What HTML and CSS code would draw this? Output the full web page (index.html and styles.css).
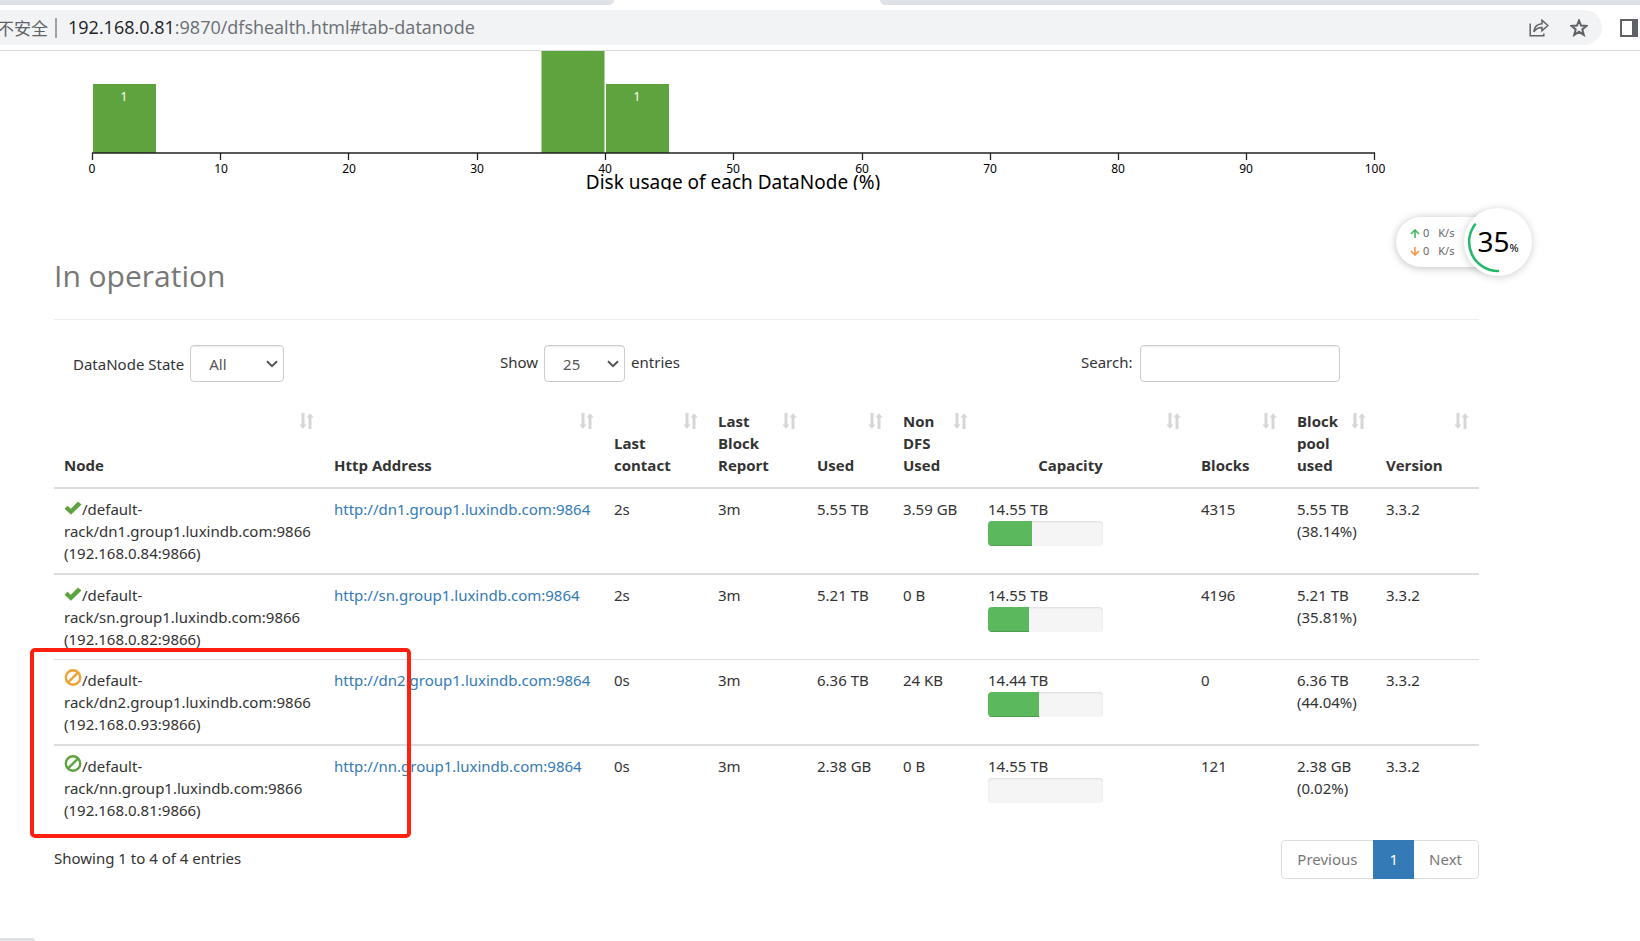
FILE: index.html
```html
<!DOCTYPE html>
<html lang="en">
<head>
<meta charset="utf-8">
<title>Namenode information</title>
<link rel="stylesheet" href="styles.css">
</head>
<body>
<svg class="defs" aria-hidden="true">
  <symbol id="sort" viewBox="0 0 15 16"><path d="M2.5 0h3v11.500h2L4 15.800 .3 11.500h2.200zM9.500 16h3V4.500h2.200L11 .2 7.500 4.500h2z"/></symbol>
  <symbol id="ok" viewBox="0 0 17 14"><path d="M0 7.800 3.200 4.700 6.300 7.800 13.500 .5 17 3.400 6.500 13.800z"/></symbol>
  <symbol id="ban" viewBox="0 0 17 17"><circle cx="8.500" cy="8.500" r="7.200"/><path d="M3.600 13.400 13.400 3.600"/></symbol>
</svg>

<header class="browser">
  <div class="tabstrip"><span class="tabs-left"></span><span class="tabs-right"></span></div>
  <div class="toolbar">
    <div class="omnibox">
      <span class="insecure">不安全</span>
      <span class="divider"></span>
      <div class="url" role="textbox" aria-label="Address">192.168.0.81<span class="path">:9870/dfshealth.html#tab-datanode</span></div>
      <button class="tool" aria-label="Share"><svg width="20" height="18" viewBox="0 0 20 18"><path d="M1.200 4.500V16.800H14.800V14.500M4.800 12.800C5.500 7.500 8.500 5 13 4.800V1.200L18.800 6.500 13 11.800V8.500C9.500 8.300 7 9.800 4.800 12.800Z"/></svg></button>
      <button class="tool" aria-label="Bookmark"><svg width="18" height="18" viewBox="0 0 18 18"><path class="star" d="M9 1.500 11 6.600 16.600 6.900 12.300 10.400 13.800 15.900 9 12.800 4.200 15.900 5.700 10.400 1.400 6.900 7 6.600Z"/></svg></button>
    </div>
    <button class="tool panel" aria-label="Side panel"><svg width="18" height="18" viewBox="0 0 18 18"><path d="M1 1H17V17H1Z"/><path class="solid" d="M12 0h6v18h-6z"/></svg></button>
  </div>
</header>

<main class="container">
  <svg class="chart" width="1425" height="139" viewBox="0 0 1425 139" role="img" aria-label="Disk usage of each DataNode">
    <g class="bars"><rect x="39" y="33" width="63" height="69"/><rect x="487.500" y="0" width="63" height="102"/><rect x="552" y="33" width="63" height="69"/></g>
    <g class="count"><text x="70" y="50">1</text><text x="583" y="50">1</text></g>
    <path class="axis" d="M38.500 109V102H1320.500V109M166.500 102V109M294.500 102V109M423.500 102V109M551.500 102V109M679.500 102V109M808.500 102V109M936.500 102V109M1064.500 102V109M1192.500 102V109"/>
    <g class="ticks"><text x="38" y="122">0</text><text x="167" y="122">10</text><text x="295" y="122">20</text><text x="423" y="122">30</text><text x="551" y="122">40</text><text x="679" y="122">50</text><text x="808" y="122">60</text><text x="936" y="122">70</text><text x="1064" y="122">80</text><text x="1192" y="122">90</text><text x="1321" y="122">100</text></g>
    <text class="caption" x="679" y="138">Disk usage of each DataNode (%)</text>
  </svg>

  <h1 class="page-header">In operation</h1>

  <div class="filters">
    <div class="filter state"><label for="state">DataNode State</label><span class="select"><select id="state"><option>All</option></select><svg width="12" height="8" viewBox="0 0 12 8"><path d="M1 1.200 6 6.200 11 1.200"/></svg></span></div>
    <div class="filter raised"><label for="len">Show</label><span class="select short"><select id="len"><option>25</option></select><svg width="12" height="8" viewBox="0 0 12 8"><path d="M1 1.200 6 6.200 11 1.200"/></svg></span><label for="len">entries</label></div>
    <div class="filter raised search"><label for="search">Search:</label><input id="search" type="search"></div>
  </div>

  <table class="nodes">
    <colgroup><col class="c-node"><col class="c-http"><col class="c-contact"><col class="c-report"><col class="c-used"><col class="c-nondfs"><col class="c-capacity"><col class="c-blocks"><col class="c-pool"><col class="c-version"></colgroup>
    <thead><tr>
      <th>Node<svg><use href="#sort"/></svg></th>
      <th>Http Address<svg><use href="#sort"/></svg></th>
      <th>Last<br>contact<svg><use href="#sort"/></svg></th>
      <th>Last<br>Block<br>Report<svg><use href="#sort"/></svg></th>
      <th>Used<svg><use href="#sort"/></svg></th>
      <th>Non<br>DFS<br>Used<svg><use href="#sort"/></svg></th>
      <th class="center">Capacity<svg><use href="#sort"/></svg></th>
      <th>Blocks<svg><use href="#sort"/></svg></th>
      <th>Block<br>pool<br>used<svg><use href="#sort"/></svg></th>
      <th>Version<svg><use href="#sort"/></svg></th>
    </tr></thead>
    <tbody>
      <tr><td><svg class="ok"><use href="#ok"/></svg>/default-<br>rack/dn1.group1.luxindb.com:9866<br>(192.168.0.84:9866)</td><td><a href="#dn1">http://dn1.group1.luxindb.com:9864</a></td><td>2s</td><td>3m</td><td>5.55 TB</td><td>3.59 GB</td><td>14.55 TB<div class="progress"><div class="bar" style="width:38.14%"></div></div></td><td>4315</td><td>5.55 TB<br>(38.14%)</td><td>3.3.2</td></tr>
      <tr><td><svg class="ok"><use href="#ok"/></svg>/default-<br>rack/sn.group1.luxindb.com:9866<br>(192.168.0.82:9866)</td><td><a href="#sn">http://sn.group1.luxindb.com:9864</a></td><td>2s</td><td>3m</td><td>5.21 TB</td><td>0 B</td><td>14.55 TB<div class="progress"><div class="bar" style="width:35.81%"></div></div></td><td>4196</td><td>5.21 TB<br>(35.81%)</td><td>3.3.2</td></tr>
      <tr class="thin"><td><svg class="ban warn"><use href="#ban"/></svg>/default-<br>rack/dn2.group1.luxindb.com:9866<br>(192.168.0.93:9866)</td><td><a href="#dn2">http://dn2.group1.luxindb.com:9864</a></td><td>0s</td><td>3m</td><td>6.36 TB</td><td>24 KB</td><td>14.44 TB<div class="progress"><div class="bar" style="width:44.04%"></div></div></td><td>0</td><td>6.36 TB<br>(44.04%)</td><td>3.3.2</td></tr>
      <tr><td><svg class="ban"><use href="#ban"/></svg>/default-<br>rack/nn.group1.luxindb.com:9866<br>(192.168.0.81:9866)</td><td><a href="#nn">http://nn.group1.luxindb.com:9864</a></td><td>0s</td><td>3m</td><td>2.38 GB</td><td>0 B</td><td>14.55 TB<div class="progress"></div></td><td>121</td><td>2.38 GB<br>(0.02%)</td><td>3.3.2</td></tr>
    </tbody>
  </table>

  <div class="footer">
    <span class="info">Showing 1 to 4 of 4 entries</span>
    <nav class="pagination"><a href="#prev">Previous</a><a class="active" href="#page1">1</a><a href="#next">Next</a></nav>
  </div>
</main>

<div class="marker"></div>
<div class="status"></div>

<aside class="monitor">
  <div class="rates">
    <div class="rate"><svg class="up" width="10" height="9" viewBox="0 0 10 9"><path d="M5 9V1M1 5 5 1 9 5"/></svg><span>0</span><span>K/s</span></div>
    <div class="rate"><svg class="down" width="10" height="9" viewBox="0 0 10 9"><path d="M5 0V8M1 4 5 8 9 4"/></svg><span>0</span><span>K/s</span></div>
  </div>
  <div class="gauge"><svg width="68" height="68" viewBox="0 0 68 68"><path d="M11 16.500A29 29 0 0 0 34 63"/></svg><span class="value">35</span><span class="unit">%</span></div>
</aside>
</body>
</html>
```

FILE: styles.css
```css
* { box-sizing: border-box; }
body {
  margin: 0;
  min-height: 100vh;
  position: relative;
  overflow: hidden;
  background: #fff;
  color: #333;
  font: 15px/22px "Noto Sans", "Open Sans", sans-serif;
}
.defs { position: absolute; width: 0; height: 0; }
a { color: #337ab7; text-decoration: none; }

/* browser chrome */
.browser { border-bottom: 1px solid #d9dadc; }
.tabstrip { display: flex; justify-content: space-between; height: 5px; }
.tabs-left { width: 614px; background: #dee1e6; border-bottom-right-radius: 8px; }
.tabs-right { flex: 1; margin-left: 266px; background: #dee1e6; border-bottom-left-radius: 8px; }
.toolbar { display: flex; align-items: center; padding: 5px 0; gap: 18px; }
.omnibox {
  flex: 1;
  display: flex;
  align-items: center;
  height: 35px;
  padding-right: 14px;
  background: #f1f3f4;
  border-radius: 0 18px 18px 0;
  font-family: "Open Sans", "Noto Sans", sans-serif;
  font-size: 18px;
}
.insecure {
  width: 48px;
  display: flex;
  justify-content: flex-end;
  overflow: hidden;
  white-space: nowrap;
  color: #5f6368;
  font-family: "Noto Sans CJK SC", sans-serif;
  font-size: 17px;
}
.divider { width: 2px; height: 20px; margin: 0 11px 0 7px; background: #9fa2a6; }
.url { flex: 1; padding-bottom: 2px; color: #202124; }
.path { color: #6b6e73; }
.tool { display: flex; padding: 0; border: 0; background: none; }
.tool + .tool { margin-left: 21px; }
.tool path { fill: none; stroke: #5f6368; stroke-width: 2; }
.omnibox .tool path { stroke-width: 1.5; }
.omnibox .tool .star { stroke-width: 2; }
.tool .solid { fill: #5f6368; stroke: none; }
.panel { margin-right: 2px; }

.container { max-width: 1479px; padding-left: 54px; }

/* histogram */
.chart { display: block; overflow: hidden; }
.bars { fill: #5fa33e; }
.axis { fill: none; stroke: #222; stroke-width: 1.3; }
.count, .ticks { font-size: 12px; text-anchor: middle; }
.count { fill: #fff; }
.ticks { fill: #000; }
.caption { font-size: 19px; text-anchor: middle; fill: #000; }

.page-header {
  margin: 66px 0 25px;
  padding-bottom: 23px;
  border-bottom: 1px solid #eee;
  color: #777;
  font-family: "Open Sans", "Noto Sans", sans-serif;
  font-size: 30px;
  line-height: 40px;
  font-weight: 400;
}

/* table controls */
.filters { display: grid; grid-template-columns: 446px 581px 1fr; }
.filter { display: flex; align-items: center; gap: 6px; }
.raised label { padding-bottom: 3px; }
.state { padding-left: 19px; }
.search { gap: 7px; }
.select { position: relative; width: 94px; }
.short { width: 81px; }
.select select, .search input {
  width: 100%;
  height: 37px;
  border: 1px solid #ccc;
  border-radius: 4px;
  background: #fff;
  box-shadow: inset 0 1px 1px rgba(0, 0, 0, .075);
  color: #555;
  font: inherit;
}
.select select { display: block; appearance: none; padding: 0 18px; }
.select svg { position: absolute; right: 6px; top: 15px; fill: none; stroke: #555; stroke-width: 2; }
.search input { width: 200px; }

/* datanode table */
.nodes { width: 100%; margin-top: 21px; table-layout: fixed; border-collapse: separate; border-spacing: 0; }
.c-node { width: 270px; }
.c-http { width: 280px; }
.c-contact { width: 104px; }
.c-report { width: 99px; }
.c-used { width: 86px; }
.c-nondfs { width: 85px; }
.c-capacity { width: 213px; }
.c-blocks { width: 96px; }
.c-pool { width: 89px; }
.c-version { width: 103px; }
th {
  position: relative;
  padding: 7px 0 11px 10px;
  border-bottom: 2px solid #ddd;
  text-align: left;
  vertical-align: bottom;
  font-family: "Open Sans", "Noto Sans", sans-serif;
  font-weight: 700;
}
th svg { position: absolute; top: 10px; right: 10px; width: 15px; height: 16px; fill: #d6d6d6; }
th.center { padding-right: 38px; text-align: center; }
td { padding: 9px 0 9px 10px; vertical-align: top; white-space: nowrap; }
tr + tr td { border-top: 2px solid #ddd; }
tr.thin td { border-top-width: 1px; }
.ok { width: 18px; height: 14px; fill: #5fa33e; }
.ban { width: 18px; height: 17px; fill: none; stroke: #5fa33e; stroke-width: 2.4; vertical-align: 0; margin-top: -4px; }
.warn { stroke: #eea236; }
.progress {
  width: 115px;
  height: 25px;
  margin-top: 1px;
  overflow: hidden;
  border-radius: 4px;
  background: #f5f5f5;
  box-shadow: inset 0 1px 2px rgba(0, 0, 0, .1);
}
.bar { height: 100%; background: #5cb85c; box-shadow: inset 0 -1px 0 rgba(0, 0, 0, .15); }

.footer { display: flex; justify-content: space-between; align-items: center; margin-top: 10px; }
.info { padding-bottom: 4px; }
.pagination { display: flex; border: 1px solid #ddd; border-radius: 4px; }
.pagination a { padding: 7px 16px 8px 15px; color: #777; }
.pagination .active { margin: -1px 0; padding: 8px 16px 9px; background: #337ab7; color: #fff; }

/* overlays */
.marker { position: absolute; left: 30px; top: 648px; width: 381px; height: 190px; border: 4px solid #ff2010; border-radius: 5px; }
.status { position: absolute; left: 0; bottom: 0; width: 35px; height: 3px; background: #dee1e6; border-top-right-radius: 6px; }
.monitor { position: absolute; left: 1396px; top: 208px; display: flex; align-items: center; }
.rates {
  width: 100px;
  height: 50px;
  padding: 7px 0 7px 14px;
  border-radius: 25px 0 0 25px;
  background: #fff;
  box-shadow: 0 1px 8px rgba(0, 0, 0, .25);
  color: #666;
  font-size: 11px;
  line-height: 18px;
}
.rate { display: flex; align-items: center; gap: 3px; }
.rate span + span { margin-left: 6px; }
.rate svg { fill: none; stroke-width: 1.6; }
.up { stroke: #3dbb5f; }
.down { stroke: #ff9440; }
.gauge {
  position: relative;
  display: flex;
  align-items: baseline;
  justify-content: center;
  width: 68px;
  height: 68px;
  margin-left: -32px;
  border-radius: 50%;
  background: #fff;
  box-shadow: 0 1px 8px rgba(0, 0, 0, .2);
  color: #000;
}
.gauge svg { position: absolute; inset: 0; fill: none; stroke: #22b96a; stroke-width: 2.5; stroke-linecap: round; }
.value { font-size: 28px; line-height: 66px; }
.unit { font-size: 11px; }
```
